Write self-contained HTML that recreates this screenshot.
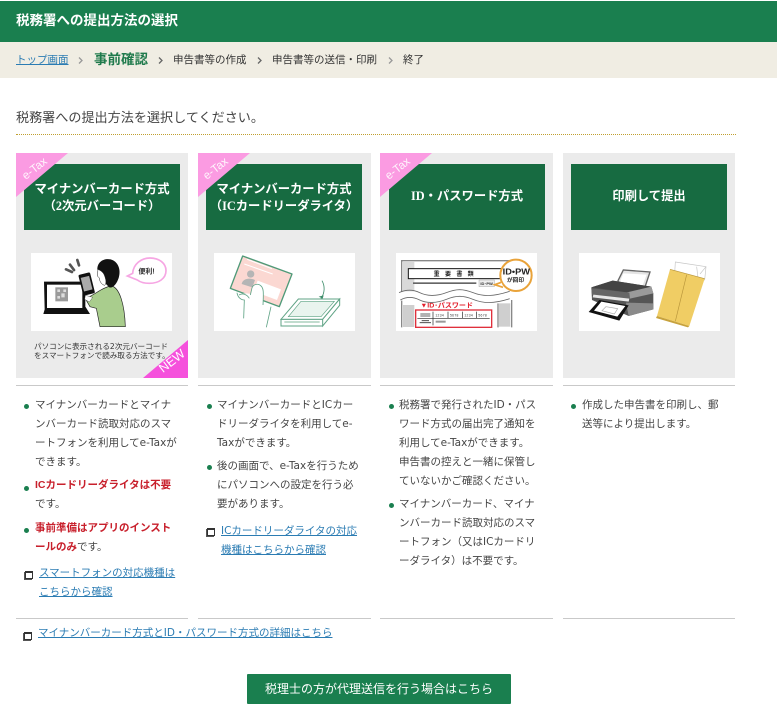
<!DOCTYPE html>
<html lang="ja">
<head>
<meta charset="utf-8">
<title>税務署への提出方法の選択</title>
<style>
html,body{margin:0;padding:0;background:#fff}
body{width:777px;height:727px;position:relative;overflow:hidden;font-family:"DejaVu Sans","Noto Sans CJK JP",sans-serif;color:#333}
.a{position:absolute;white-space:nowrap}
a{color:#2b7cb3;text-decoration:underline}
.card{position:absolute;top:153px;height:225px;background:#ebebeb}
.head{position:absolute;top:164px;width:156px;height:64px;padding-bottom:2px;background:#176b41;color:#fff;font-family:"Liberation Serif","Noto Sans CJK JP",serif;font-weight:bold;font-size:12.3px;line-height:17px;text-align:center;display:flex;align-items:center;justify-content:center}
.two{padding-bottom:0;padding-top:2px}
.ln{position:absolute;height:1px;background:#c9c9c9}
.t{position:absolute;white-space:nowrap;font-size:10.5px;line-height:19px;color:#444}
.b{position:absolute;width:5px;height:5px;border-radius:50%;background:#1a7f4f}
.red{color:#c8202c;font-weight:bold;font-family:"Liberation Sans","Noto Sans CJK JP",sans-serif}
.ic{position:absolute;width:6px;height:5px;border:1px solid #333;border-top-width:2px;background:#fff;box-shadow:-1px 1px 0 #555}
svg{position:absolute}
.tag{position:absolute;color:#fff;white-space:nowrap;font-family:"Liberation Sans",sans-serif;transform:translate(-50%,-50%) rotate(-38deg)}
.chev{position:absolute;top:56px}
</style>
</head>
<body>
<div class="a" style="left:0;top:1px;width:777px;height:41px;background:#1a7f4f"></div>
<div class="a" style="left:16px;top:11px;line-height:20px;font-size:13.5px;font-weight:bold;color:#fff">税務署への提出方法の選択</div>
<div class="a" style="left:0;top:42px;width:777px;height:36px;background:#f0ede3"></div>
<div class="a" style="left:16px;top:50px;line-height:20px;font-size:10.5px"><a href="#">トップ画面</a></div>
<div class="a" style="left:94px;top:50px;line-height:20px;font-size:13.5px;font-weight:bold;color:#1f7a4c">事前確認</div>
<div class="a" style="left:173px;top:50px;line-height:20px;font-size:10.5px">申告書等の作成</div>
<div class="a" style="left:272px;top:50px;line-height:20px;font-size:10.5px">申告書等の送信・印刷</div>
<div class="a" style="left:403px;top:50px;line-height:20px;font-size:10.5px">終了</div>
<svg class="chev" style="left:78px" width="6" height="9"><path d="M1 1.5l3 3-3 3" fill="none" stroke="#999" stroke-width="1.3"/></svg>
<svg class="chev" style="left:158px" width="6" height="9"><path d="M1 1.5l3 3-3 3" fill="none" stroke="#666" stroke-width="1.3"/></svg>
<svg class="chev" style="left:257px" width="6" height="9"><path d="M1 1.5l3 3-3 3" fill="none" stroke="#666" stroke-width="1.3"/></svg>
<svg class="chev" style="left:388px" width="6" height="9"><path d="M1 1.5l3 3-3 3" fill="none" stroke="#999" stroke-width="1.3"/></svg>

<div class="a" style="left:16px;top:109px;line-height:20px;font-size:13.1px;color:#444">税務署への提出方法を選択してください。</div>
<div class="a" style="left:16px;top:134px;width:720px;border-top:1px dotted #c0a030"></div>

<div class="card" style="left:16px;width:172px"></div>
<div class="card" style="left:198px;width:173px"></div>
<div class="card" style="left:380px;width:173px"></div>
<div class="card" style="left:563px;width:172px"></div>

<div class="head two" style="left:24px">マイナンバーカード方式<br>（2次元バーコード）</div>
<div class="head two" style="left:206px">マイナンバーカード方式<br>（ICカードリーダライタ）</div>
<div class="head" style="left:389px">ID・パスワード方式</div>
<div class="head" style="left:571px">印刷して提出</div>

<svg style="left:16px;top:153px" width="54" height="46"><path d="M0 0H52L0 44z" fill="#fb9be2"/></svg>
<svg style="left:198px;top:153px" width="54" height="46"><path d="M0 0H52L0 44z" fill="#fb9be2"/></svg>
<svg style="left:380px;top:153px" width="54" height="46"><path d="M0 0H52L0 44z" fill="#fb9be2"/></svg>
<div class="tag" style="left:35px;top:169px;font-size:11.5px;opacity:.9">e-Tax</div>
<div class="tag" style="left:216px;top:169px;font-size:11.5px;opacity:.9">e-Tax</div>
<div class="tag" style="left:398px;top:169px;font-size:11.5px;opacity:.9">e-Tax</div>

<!-- image 1 -->
<svg style="left:28px;top:250px" width="148" height="84" viewBox="0 0 444 252">
<rect x="9" y="9" width="423" height="234" fill="#fff"/>
<path d="M48 95H172V170L186 192H46L50 178z" fill="#111"/>
<rect x="57" y="104" width="106" height="70" fill="#fff"/>
<rect x="82" y="112" width="38" height="42" fill="#9a9a9a"/>
<path d="M88 118h8v8h-8zM106 118h8v8h-8zM88 138h8v8h-8zM100 130h10v12h-10z" fill="#ddd"/>
<path d="M114 58l18 8M126 44l12 16M148 30l5 16" stroke="#555" stroke-width="8" stroke-linecap="round" fill="none"/>
<path d="M172 146C200 135 222 112 250 108 275 112 290 165 292 230H216L205 175 186 170z" fill="#a9cd8d" stroke="#222" stroke-width="2"/>
<path d="M208 58C208 36 226 24 248 28 270 34 280 58 272 84 266 102 254 116 244 112L232 100C232 88 226 76 224 70 218 64 212 62 208 58z" fill="#111"/>
<path d="M210 58C218 62 226 66 230 78 234 90 236 100 230 106 220 104 214 92 214 84L208 78z" fill="#fff" stroke="#222" stroke-width="1.5"/>
<rect x="158" y="70" width="36" height="64" rx="4" transform="rotate(-14 176 102)" fill="#111"/>
<rect x="163" y="80" width="26" height="42" transform="rotate(-14 176 102)" fill="#aaa"/>
<path d="M172 136l22 6-10 14-14-8z" fill="#fff" stroke="#222"/>
<path d="M314 70C316 42 340 24 366 24 394 24 414 40 414 62 414 86 392 100 364 100 348 100 336 96 328 90L298 78z" fill="#fff" stroke="#f6a6e3" stroke-width="5"/>
<text x="331" y="71" font-size="21" font-weight="bold" fill="#333" font-family="'Liberation Sans','Noto Sans CJK JP',sans-serif">便利!</text>
</svg>

<!-- image 2 -->
<svg style="left:211px;top:250px" width="148" height="84" viewBox="0 0 444 252">
<rect x="9" y="9" width="423" height="234" fill="#fff"/>
<path d="M95 18L243 72 205 170 58 115z" fill="#fbd8d2" stroke="#4f9a78" stroke-width="4" stroke-linejoin="round"/>
<path d="M108 28l75 28M100 42l85 30" stroke="#fff" stroke-width="3"/>
<path d="M140 92l70 26-12 32-70-26z" fill="#fff"/>
<circle cx="119" cy="72" r="11" fill="#b5b5b5"/>
<path d="M92 102C95 86 115 82 132 90L124 112z" fill="#b5b5b5"/>
<path d="M84 135C92 128 112 130 120 132L122 116C124 102 140 98 150 104 160 112 158 130 156 165L180 170 166 232H98L100 170C92 160 82 150 84 135z" fill="#fff"/>
<path d="M78 128C80 142 90 150 100 150L98 205M118 135L122 118C124 102 140 100 148 106 158 112 158 125 156 165M180 170L166 232" fill="none" stroke="#5fa385" stroke-width="2.5"/>
<path d="M84 135C95 128 108 134 115 145" fill="none" stroke="#5fa385" stroke-width="2.5"/>
<path d="M333 92C342 108 342 128 330 146" fill="none" stroke="#3e8d6a" stroke-width="2.5"/>
<path d="M323 140l12 6 3-10z" fill="#3e8d6a"/>
<path d="M262 147H386L335 208H210z" fill="#fff" stroke="#5fa385" stroke-width="3"/>
<path d="M270 154H370L330 200H232z" fill="#e9f4ee" stroke="#5fa385" stroke-width="2"/>
<path d="M210 208H335V228H210zM335 208L386 147V166L335 228z" fill="#fff" stroke="#5fa385" stroke-width="3"/>
<path d="M220 216H326" stroke="#9cc7b1" stroke-width="4"/>
</svg>

<!-- image 3 -->
<svg style="left:393px;top:250px" width="148" height="84" viewBox="0 0 444 252" font-family="'Liberation Sans','Noto Sans CJK JP',sans-serif">
<rect x="9" y="9" width="423" height="234" fill="#fff"/>
<path d="M26 125V32H352" fill="none" stroke="#888" stroke-width="4"/>
<rect x="30" y="36" width="34" height="88" fill="#d9d9d9"/>
<rect x="46" y="56" width="290" height="30" fill="#fff" stroke="#111" stroke-width="3"/>
<text x="122" y="78" font-size="18" font-weight="bold" fill="#222" letter-spacing="16">重要書類</text>
<rect x="60" y="97" width="190" height="5" fill="#666"/>
<rect x="258" y="90" width="46" height="20" fill="#eee" stroke="#888"/>
<text x="262" y="105" font-size="12" font-weight="bold" fill="#333">ID･PW</text>
<path d="M18 128C40 118 60 118 80 128S130 140 160 128 210 116 240 128 300 140 350 124M22 150C40 140 60 140 80 150S130 160 160 148 210 136 240 148 300 162 350 146" fill="none" stroke="#666" stroke-width="2.5"/>
<path d="M26 152V232M356 150V232M315 160V232" fill="none" stroke="#888" stroke-width="4"/>
<rect x="30" y="165" width="34" height="66" fill="#cfcfcf"/>
<rect x="318" y="160" width="34" height="70" fill="#cfcfcf"/>
<text x="82" y="172" font-size="20" font-weight="bold" fill="#e3202c" textLength="158" lengthAdjust="spacingAndGlyphs">▼ID･パスワード</text>
<rect x="68" y="180" width="228" height="52" fill="#fff" stroke="#e0303c" stroke-width="4"/>
<path d="M73 205H290M120 185V205M165 185V205M208 185V205M250 185V205M120 205V226" stroke="#222" stroke-width="2"/>
<path d="M82 192H112M82 198H112M86 212H108M80 218H114" stroke="#333" stroke-width="2.5"/>
<text x="127" y="199" font-size="10" fill="#333" letter-spacing="1">1234</text>
<text x="171" y="199" font-size="10" fill="#333" letter-spacing="1">5678</text>
<text x="214" y="199" font-size="10" fill="#333" letter-spacing="1">1234</text>
<text x="256" y="199" font-size="10" fill="#333" letter-spacing="1">5678</text>
<rect x="128" y="212" width="30" height="6" fill="#999"/>
<circle cx="369" cy="76" r="47" fill="#fff" stroke="#e9a33a" stroke-width="6"/>
<path d="M326 98L304 104 332 116z" fill="#fff"/>
<path d="M325 97L305 104 330 112" fill="none" stroke="#e9a33a" stroke-width="5"/>
<text x="329" y="74" font-size="26" font-weight="bold" fill="#222" textLength="82" lengthAdjust="spacingAndGlyphs">ID•PW</text>
<text x="342" y="96" font-size="17" font-weight="bold" fill="#222">が回印</text>
</svg>

<!-- image 4 -->
<svg style="left:576px;top:250px" width="148" height="84" viewBox="0 0 444 252">
<rect x="9" y="9" width="423" height="234" fill="#fff"/>
<path d="M126 92L142 60 222 66 204 120 130 110z" fill="#e4e4e4" stroke="#666" stroke-width="4"/>
<path d="M142 70L212 74 200 106 130 100z" fill="#fff"/>
<path d="M46 112L110 92 226 110 232 130 232 178 158 198 48 150z" fill="#555"/>
<path d="M46 112L110 92 226 110 160 128z" fill="#444"/>
<path d="M150 128L226 110 232 130 162 146z" fill="#9a9a9a"/>
<path d="M46 115L160 128 162 146 48 134z" fill="#666"/>
<path d="M52 134L160 146 158 155 50 142z" fill="#e8e8e8"/>
<path d="M150 158L232 160 232 178 158 198z" fill="#8a8a8a"/>
<path d="M70 150L158 166 130 212 38 186z" fill="#111"/>
<path d="M76 155L148 168 124 200 54 182z" fill="#fff"/>
<path d="M90 170L125 176 115 192 78 182z" fill="none" stroke="#aaa" stroke-width="2"/>
<path d="M298 36L390 50 386 90 362 84 296 70z" fill="#fff" stroke="#c6c6c6" stroke-width="2"/>
<path d="M362 50L366 84M390 50L372 72" stroke="#c6c6c6" stroke-width="2" fill="none"/>
<path d="M282 58L386 86 340 228 243 198z" fill="#f0cd64"/>
<path d="M243 198L340 228 336 232 240 204z" fill="#c7a23d"/>
<path d="M332 74L298 214M282 58L386 86" stroke="#b8953a" stroke-width="2" fill="none"/>
</svg>

<div class="a" style="left:34px;top:342px;line-height:9px;font-size:7.6px;color:#333">パソコンに表示される2次元バーコード<br>をスマートフォンで読み取る方法です。</div>
<svg style="left:143px;top:340px" width="45" height="38"><path d="M45 0V38H0z" fill="#f551dc"/></svg>
<div class="tag" style="left:172px;top:361px;font-size:12.5px">NEW</div>

<div class="ln" style="left:16px;top:385px;width:172px"></div>
<div class="ln" style="left:198px;top:385px;width:173px"></div>
<div class="ln" style="left:380px;top:385px;width:173px"></div>
<div class="ln" style="left:563px;top:385px;width:172px"></div>
<div class="ln" style="left:16px;top:618px;width:172px"></div>
<div class="ln" style="left:198px;top:618px;width:173px"></div>
<div class="ln" style="left:380px;top:618px;width:173px"></div>
<div class="ln" style="left:563px;top:618px;width:172px"></div>

<!-- col 1 -->
<span class="b" style="left:24px;top:404px"></span>
<div class="t" style="left:35px;top:395.5px">マイナンバーカードとマイナ<br>ンバーカード読取対応のスマ<br>ートフォンを利用してe-Taxが<br>できます。</div>
<span class="b" style="left:24px;top:486px"></span>
<div class="t" style="left:35px;top:475.5px"><span class="red">ICカードリーダライタは不要</span><br>です。</div>
<span class="b" style="left:24px;top:528px"></span>
<div class="t" style="left:35px;top:518.5px"><span class="red">事前準備はアプリのインスト<br>ールのみ</span>です。</div>
<span class="ic" style="left:25px;top:571px"></span>
<div class="t" style="left:39px;top:563.5px"><a href="#">スマートフォンの対応機種は<br>こちらから確認</a></div>

<!-- col 2 -->
<span class="b" style="left:207px;top:404px"></span>
<div class="t" style="left:217px;top:395.5px">マイナンバーカードとICカー<br>ドリーダライタを利用してe-<br>Taxができます。</div>
<span class="b" style="left:207px;top:465px"></span>
<div class="t" style="left:217px;top:456.5px">後の画面で、e-Taxを行うため<br>にパソコンへの設定を行う必<br>要があります。</div>
<span class="ic" style="left:207px;top:528px"></span>
<div class="t" style="left:221px;top:521.5px"><a href="#">ICカードリーダライタの対応<br>機種はこちらから確認</a></div>

<!-- col 3 -->
<span class="b" style="left:389px;top:404px"></span>
<div class="t" style="left:399px;top:395.5px">税務署で発行されたID・パス<br>ワード方式の届出完了通知を<br>利用してe-Taxができます。<br>申告書の控えと一緒に保管し<br>ていないかご確認ください。</div>
<span class="b" style="left:389px;top:503px"></span>
<div class="t" style="left:399px;top:494.5px">マイナンバーカード、マイナ<br>ンバーカード読取対応のスマ<br>ートフォン（又はICカードリ<br>ーダライタ）は不要です。</div>

<!-- col 4 -->
<span class="b" style="left:571px;top:404px"></span>
<div class="t" style="left:582px;top:395.5px">作成した申告書を印刷し、郵<br>送等により提出します。</div>

<span class="ic" style="left:24px;top:632px"></span>
<div class="t" style="left:38px;top:623.5px"><a href="#">マイナンバーカード方式とID・パスワード方式の詳細はこちら</a></div>

<div class="a" style="left:247px;top:674px;width:264px;height:30px;background:#1a7f4f;color:#fff;border-radius:1px;font-size:12px;line-height:30px;text-align:center">税理士の方が代理送信を行う場合はこちら</div>
</body>
</html>
